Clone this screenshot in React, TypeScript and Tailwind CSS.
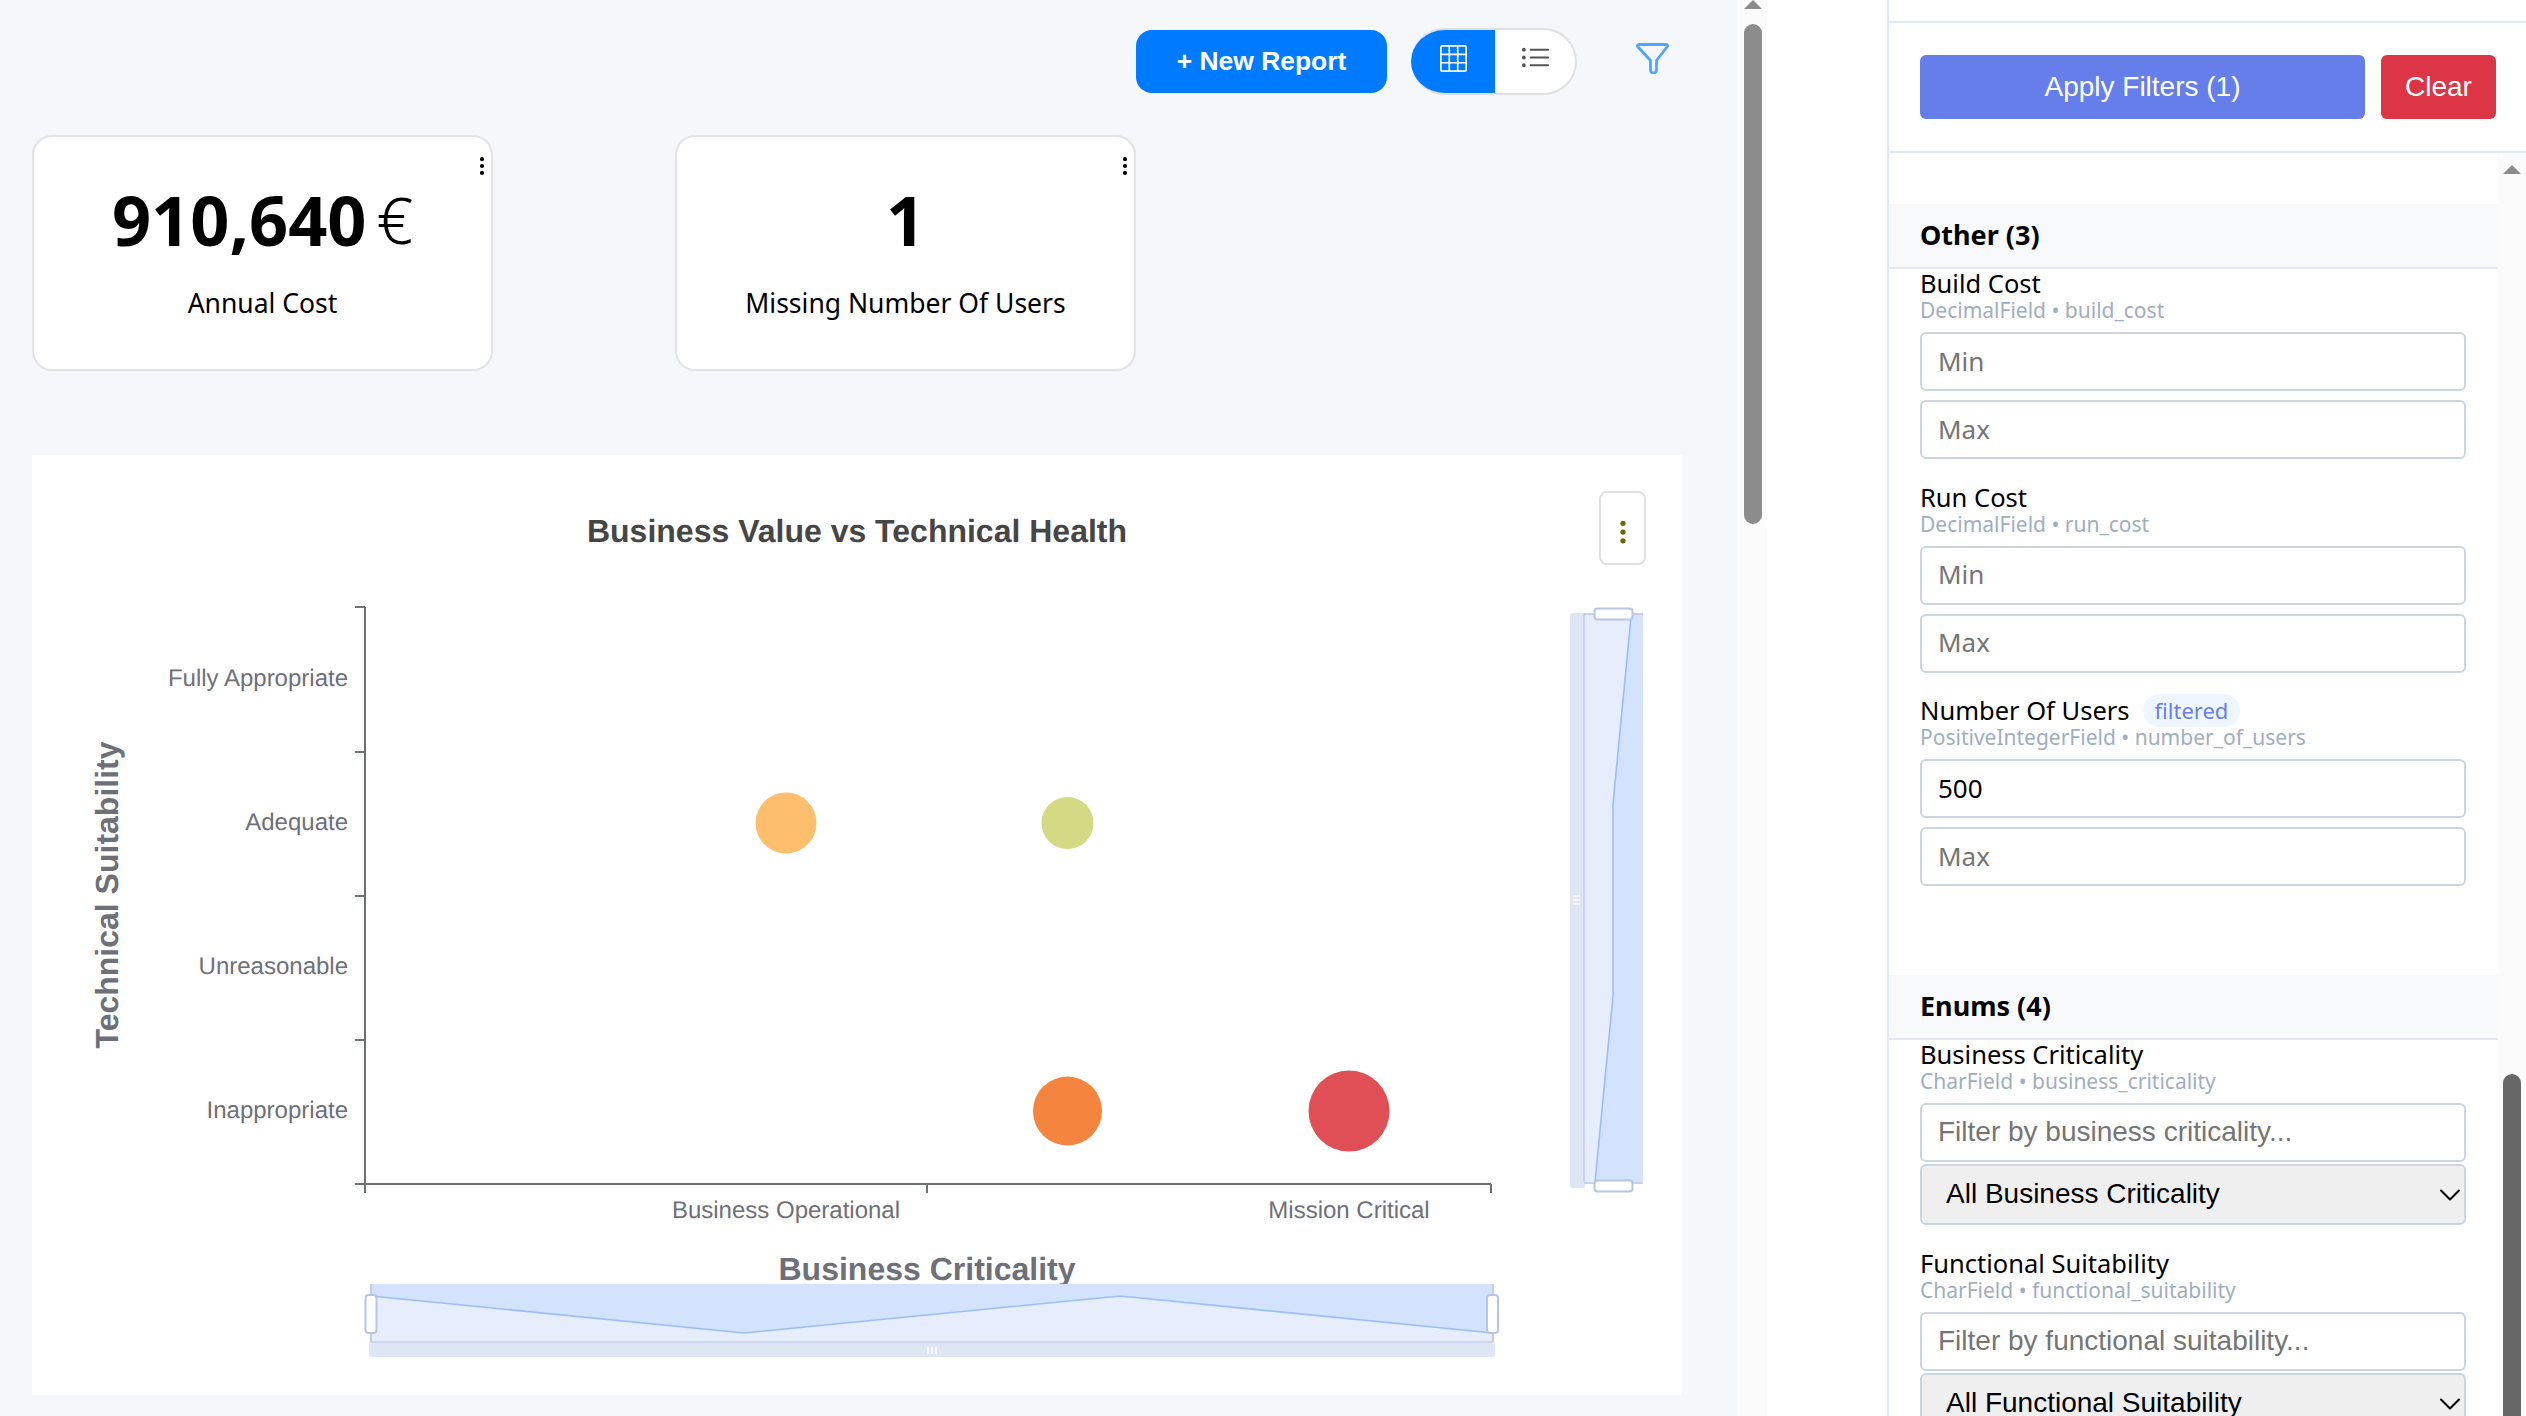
import { BsGrid3X3, BsListUl, BsThreeDotsVertical } from "react-icons/bs";
import { ChevronDown } from "lucide-react";

const ubuntu = "font-['Noto_Sans',sans-serif]";
const arial = "font-['Liberation_Sans',Arial,sans-serif]";

function KpiCard({ value, unit, label }: { value: string; unit?: string; label: string }) {
  return (
    <div className="relative flex h-[236px] w-[461px] flex-col items-center rounded-[20px] border-2 border-[#e3e3e6] bg-white pt-[43px]">
      <BsThreeDotsVertical size={22} className="absolute right-[-2px] top-[18px] text-black" />
      <div className="flex h-[80px] items-center text-black">
        <span className="text-[68.5px] font-bold leading-[80px]">{value}</span>
        {unit && <span className="ml-[10px] text-[64px] font-light leading-[80px]">{unit}</span>}
      </div>
      <div className="mt-[27px] text-[26.5px] leading-[32px] text-black">{label}</div>
    </div>
  );
}

function ScatterChart() {
  const yLabels = [
    { y: 678, t: "Fully Appropriate" },
    { y: 822, t: "Adequate" },
    { y: 966, t: "Unreasonable" },
    { y: 1110, t: "Inappropriate" },
  ];
  return (
    <svg
      viewBox="32 455 1650 940"
      textRendering="geometricPrecision"
      className="block h-full w-full font-['Liberation_Sans',Arial,sans-serif]"
    >
      <text x="857" y="531" textAnchor="middle" dominantBaseline="central" fontSize="32" fontWeight="700" fill="#464646">
        Business Value vs Technical Health
      </text>

      {/* axes */}
      <g stroke="#6e7079" strokeWidth="2" fill="none">
        <path d="M365 607V1184H1491" />
        {[607, 752, 896, 1040, 1184].map((y) => (
          <path key={y} d={`M355 ${y}H365`} />
        ))}
        {[365, 927, 1491].map((x) => (
          <path key={x} d={`M${x} 1184V1193`} />
        ))}
      </g>
      <g fill="#6e7079" fontSize="24">
        {yLabels.map((l) => (
          <text key={l.t} x="348" y={l.y} textAnchor="end" dominantBaseline="central">
            {l.t}
          </text>
        ))}
        <text x="786" y="1210" textAnchor="middle" dominantBaseline="central">Business Operational</text>
        <text x="1349" y="1210" textAnchor="middle" dominantBaseline="central">Mission Critical</text>
      </g>
      <text x="927" y="1269" textAnchor="middle" dominantBaseline="central" fontSize="32" fontWeight="700" fill="#6e7079">
        Business Criticality
      </text>
      <text
        transform="translate(107 895) rotate(-90)"
        textAnchor="middle"
        dominantBaseline="central"
        fontSize="32"
        fontWeight="700"
        fill="#6e7079"
      >
        Technical Suitability
      </text>

      {/* points */}
      <circle cx="786" cy="823" r="30.5" fill="#fdbe6e" />
      <circle cx="1067.5" cy="823" r="26" fill="#d4da83" />
      <circle cx="1067.5" cy="1111" r="34.5" fill="#f5843f" />
      <circle cx="1349" cy="1111" r="40.5" fill="#e04f55" />

      {/* horizontal zoom */}
      <rect x="369" y="1342" width="1126" height="15" rx="3" fill="#dee5f3" />
      <rect x="371" y="1284" width="1122" height="58" fill="#d3e2fd" />
      <path d="M371 1296L744 1333L1120 1296L1493 1333V1342H371Z" fill="#e6eefe" />
      <path d="M371 1296L744 1333L1120 1296L1493 1333" fill="none" stroke="#9dbdf8" strokeWidth="1.6" />
      <path d="M371 1342H1493" stroke="#ccd6ec" strokeWidth="2" />
      <path d="M371 1284V1342M1493 1284V1342" stroke="#b7c5e2" strokeWidth="1.6" />
      <path d="M928 1347V1354M932 1347V1354M936 1347V1354" stroke="#fff" strokeWidth="1.4" />
      <rect x="365.5" y="1295" width="11" height="38" rx="3" fill="#fff" stroke="#b7c5e2" strokeWidth="2" />
      <rect x="1487" y="1295" width="11" height="38" rx="3" fill="#fff" stroke="#b7c5e2" strokeWidth="2" />

      {/* vertical zoom */}
      <rect x="1570" y="613" width="15" height="575" rx="3" fill="#dee5f3" />
      <rect x="1585" y="614" width="58" height="568" fill="#d3e2fd" />
      <path d="M1631 617L1613 804V996L1595 1182H1585V614H1631Z" fill="#e6eefe" />
      <path d="M1631 617L1613 804V996L1595 1182" fill="none" stroke="#9dbdf8" strokeWidth="1.6" />
      <path d="M1584 614V1182" stroke="#ccd6ec" strokeWidth="2" />
      <path d="M1584 614H1643M1584 1183H1643" stroke="#b7c5e2" strokeWidth="1.6" />
      <path d="M1573 896H1580M1573 900H1580M1573 904H1580" stroke="#fff" strokeWidth="1.4" />
      <rect x="1594.5" y="608.5" width="38" height="11" rx="3" fill="#fff" stroke="#b7c5e2" strokeWidth="2" />
      <rect x="1594.5" y="1180.5" width="38" height="11" rx="3" fill="#fff" stroke="#b7c5e2" strokeWidth="2" />
    </svg>
  );
}

function FieldInput({ placeholder, value, sans }: { placeholder: string; value?: string; sans?: boolean }) {
  return (
    <input
      readOnly
      placeholder={placeholder}
      defaultValue={value}
      className={`block h-[59px] w-[546px] shrink-0 rounded-[6px] border-2 border-[#cbd5e0] bg-white px-[16px] pb-[2px] text-black placeholder:text-[#757575] ${
        sans ? `text-[28px] ${arial}` : "text-[26px]"
      }`}
    />
  );
}

function FieldHead({ label, meta, filtered }: { label: string; meta: string; filtered?: boolean }) {
  return (
    <div className="mb-[9px] pl-[31px]">
      <div className="flex h-[28px] items-center text-[25.5px] leading-[28px] text-black">
        {label}
        {filtered && (
          <span className="ml-[13px] flex h-[33px] items-center rounded-full bg-[#eff6ff] px-[12px] text-[22px] text-[#667eea]">
            filtered
          </span>
        )}
      </div>
      <div className="h-[26px] text-[21px] leading-[26px] text-[#a0aec0]">{meta}</div>
    </div>
  );
}

function RangeField(props: { label: string; meta: string; filtered?: boolean; min?: string }) {
  return (
    <div>
      <FieldHead label={props.label} meta={props.meta} filtered={props.filtered} />
      <div className="flex flex-col gap-[9px] pl-[31px]">
        <FieldInput placeholder="Min" value={props.min} />
        <FieldInput placeholder="Max" />
      </div>
    </div>
  );
}

function EnumField({ label, meta, placeholder, all }: { label: string; meta: string; placeholder: string; all: string }) {
  return (
    <div>
      <FieldHead label={label} meta={meta} />
      <div className="flex flex-col gap-[2px] pl-[31px]">
        <FieldInput placeholder={placeholder} sans />
        <div className="relative w-[546px]">
          <select
            defaultValue={all}
            className={`block h-[61px] w-full appearance-none rounded-[6px] border-2 border-[#cbd5e0] bg-[#efefef] pb-[2px] pl-[24px] pr-[4px] text-[28px] text-black ${arial}`}
          >
            <option>{all}</option>
          </select>
          <ChevronDown
            size={36}
            strokeWidth={1.4}
            className="pointer-events-none absolute right-[-2px] top-1/2 -translate-y-1/2 text-black"
          />
        </div>
      </div>
    </div>
  );
}

function SectionHead({ title }: { title: string }) {
  return (
    <div className="flex h-[65px] items-center border-b-2 border-[#e2e8f0] bg-[#f8f9fb] pl-[31px] text-[27px] font-bold text-black">
      {title}
    </div>
  );
}

function ArrowUp() {
  return (
    <svg width="18" height="9" viewBox="0 0 18 9" className="block shrink-0">
      <polygon points="9,0 18,9 0,9" fill="#8c8c8c" />
    </svg>
  );
}

export default function App() {
  return (
    <div className={`flex h-screen w-full overflow-hidden bg-white ${ubuntu}`}>
      <main className="h-full w-[1738px] shrink-0 bg-[#f5f7fb]">
        <div className="flex items-center justify-end gap-[24px] pr-[69px] pt-[28px]">
          <button className={`h-[63px] w-[251px] rounded-[16px] bg-[#007bff] text-[26.4px] font-bold text-white ${arial}`}>
            + New Report
          </button>
          <div className="flex h-[67px] w-[166px] overflow-hidden rounded-full border-2 border-l-0 border-[#e0e0e0] bg-white">
            <div className="-my-[2px] flex w-[84px] items-center justify-center bg-[#007bff] pb-[6px]">
              <BsGrid3X3 size={27} className="text-white" />
            </div>
            <div className="flex flex-1 items-center justify-center pb-[6px]">
              <BsListUl size={31} className="text-[#555]" />
            </div>
          </div>
          <svg width="33" height="31" viewBox="0 0 33 31" className="mb-[6px] ml-[35px] block">
            <path
              d="M3 1.5H30C31.5 1.5 32 3 31 4L20.5 17.5V27A3 3 0 0 1 14.5 27V17.5L2 4C1 3 1.5 1.5 3 1.5Z"
              fill="none"
              stroke="#4da6ff"
              strokeWidth="2.8"
              strokeLinejoin="round"
            />
          </svg>
        </div>

        <div className="mt-[40px] flex gap-[182px] pl-[32px]">
          <KpiCard value="910,640" unit="€" label="Annual Cost" />
          <KpiCard value="1" label="Missing Number Of Users" />
        </div>

        <section className="relative ml-[32px] mt-[84px] h-[940px] w-[1650px] bg-white">
          <ScatterChart />
          <button className="absolute right-[36px] top-[36px] flex h-[74px] w-[47px] items-center justify-center rounded-[8px] border-2 border-[#e0e0e0] bg-white pt-[8px]">
            <BsThreeDotsVertical size={28} className="text-[#6b6500]" />
          </button>
        </section>
      </main>

      <div className="flex h-full w-[29px] shrink-0 flex-col items-center bg-[#fbfbfb]">
        <ArrowUp />
        <div className="mt-[15px] h-[500px] w-[18px] rounded-full bg-[#8c8c8c]" />
      </div>

      <aside className="ml-[120px] flex h-full flex-1 flex-col border-l-2 border-[#e2e8f0] bg-white">
        <div className="h-[23px] shrink-0 border-b-2 border-[#e2e8f0]" />
        <div className={`flex h-[130px] shrink-0 items-start gap-[16px] border-b-2 border-[#e2e8f0] pl-[31px] pt-[32px] text-[28px] text-white ${arial}`}>
          <button className="h-[64px] w-[445px] rounded-[6px] bg-[#667eea]">Apply Filters (1)</button>
          <button className="h-[64px] w-[115px] rounded-[6px] bg-[#dc3545]">Clear</button>
        </div>

        <div className="flex min-h-0 flex-1">
          <div className="w-[609px] shrink-0 pt-[51px]">
            <SectionHead title="Other (3)" />
            <div className="flex flex-col gap-[23.5px]">
              <RangeField label="Build Cost" meta="DecimalField • build_cost" />
              <RangeField label="Run Cost" meta="DecimalField • run_cost" />
              <RangeField label="Number Of Users" meta="PositiveIntegerField • number_of_users" filtered min="500" />
            </div>
            <div className="mt-[89px]">
              <SectionHead title="Enums (4)" />
            </div>
            <div className="flex flex-col gap-[24px]">
              <EnumField
                label="Business Criticality"
                meta="CharField • business_criticality"
                placeholder="Filter by business criticality..."
                all="All Business Criticality"
              />
              <EnumField
                label="Functional Suitability"
                meta="CharField • functional_suitability"
                placeholder="Filter by functional suitability..."
                all="All Functional Suitability"
              />
            </div>
          </div>
          <div className="flex flex-1 flex-col items-center bg-[#fbfbfb] pt-[12px]">
            <ArrowUp />
            <div className="mt-[900px] h-[500px] w-[18px] shrink-0 rounded-full bg-[#666]" />
          </div>
        </div>
      </aside>
    </div>
  );
}
